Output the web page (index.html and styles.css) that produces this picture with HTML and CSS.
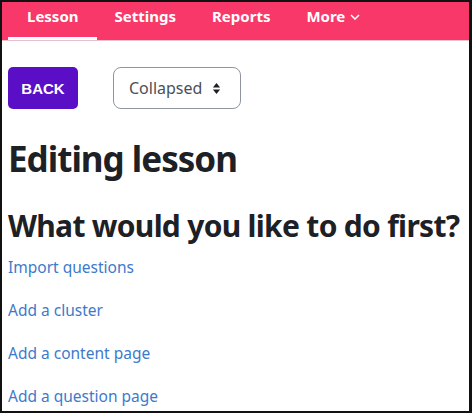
FILE: index.html
```html
<!DOCTYPE html>
<html>
<head>
<meta charset="utf-8">
<link rel="stylesheet" href="styles.css">
</head>
<body>
<div class="frame">
  <nav class="tabs">
    <a class="tab active">Lesson</a>
    <a class="tab">Settings</a>
    <a class="tab">Reports</a>
    <a class="tab">More <svg class="chev" viewBox="0 0 10 6" width="10" height="6"><path d="M1 1l4 4 4-4" fill="none" stroke="#fff" stroke-width="1.5"/></svg></a>
  </nav>
  <main class="content">
    <div class="toolbar">
      <button class="back">BACK</button>
      <div class="select">Collapsed <svg class="updown" viewBox="0 0 10 14" width="9" height="13"><path d="M5 1L9 6H1z M5 13L9 8H1z" fill="#1d2125"/></svg></div>
    </div>
    <h1 class="title">Editing lesson</h1>
    <h2 class="subtitle">What would you like to do first?</h2>
    <ul class="links">
      <li><a>Import questions</a></li>
      <li><a>Add a cluster</a></li>
      <li><a>Add a content page</a></li>
      <li><a>Add a question page</a></li>
    </ul>
  </main>
</div>
</body>
</html>
```
FILE: styles.css
```css
html, body { margin: 0; padding: 0; }
body { font-family: "Noto Sans", "Open Sans", sans-serif; background: #fff; }
.frame {
  width: 472px; height: 413px; box-sizing: border-box;
  border: 2px solid #111; border-right-width: 3px; overflow: hidden;
}
.tabs {
  display: flex; background: #f73868; height: 38px; padding-left: 6px;
  border-bottom: 1px solid #e8c0cc;
}
.tab {
  display: flex; align-items: flex-start; gap: 5px;
  color: #fff; font-weight: 700; font-size: 15px; line-height: 20px; padding: 4px 18px 0 19px;
  height: 38px; box-sizing: border-box;
}
.tab + .tab { padding-left: 18px; }
.tab.active { border-bottom: 3px solid #fff; }
.chev { margin-top: 8px; }
.content { padding: 0 6px; }
.toolbar { display: flex; align-items: center; gap: 35px; margin-top: 26px; }
.back {
  background: #5a0ec6; color: #fff; border: none; border-radius: 5px;
  font-family: "Liberation Sans", Arial, sans-serif; font-weight: 700; font-size: 15px;
  width: 70px; height: 42px; padding: 0;
}
.select {
  display: flex; align-items: center; gap: 10px; box-sizing: border-box;
  width: 128px; height: 42px; border: 1px solid #8f959e; border-radius: 8px;
  padding: 0 14px 0 15px; font-size: 16px; color: #495057;
}
.title { font-size: 35px; font-weight: 700; color: #1d2125; margin: 29px 0 0; line-height: 42px; letter-spacing: -1px; }
.subtitle { font-size: 30px; font-weight: 700; color: #1d2125; margin: 28px 0 0; line-height: 36px; letter-spacing: -0.7px; }
.links { list-style: none; margin: 13px 0 0; padding: 0; }
.links li { height: 43px; font-size: 15.5px; color: #3d7acb; line-height: 20px; }
```
